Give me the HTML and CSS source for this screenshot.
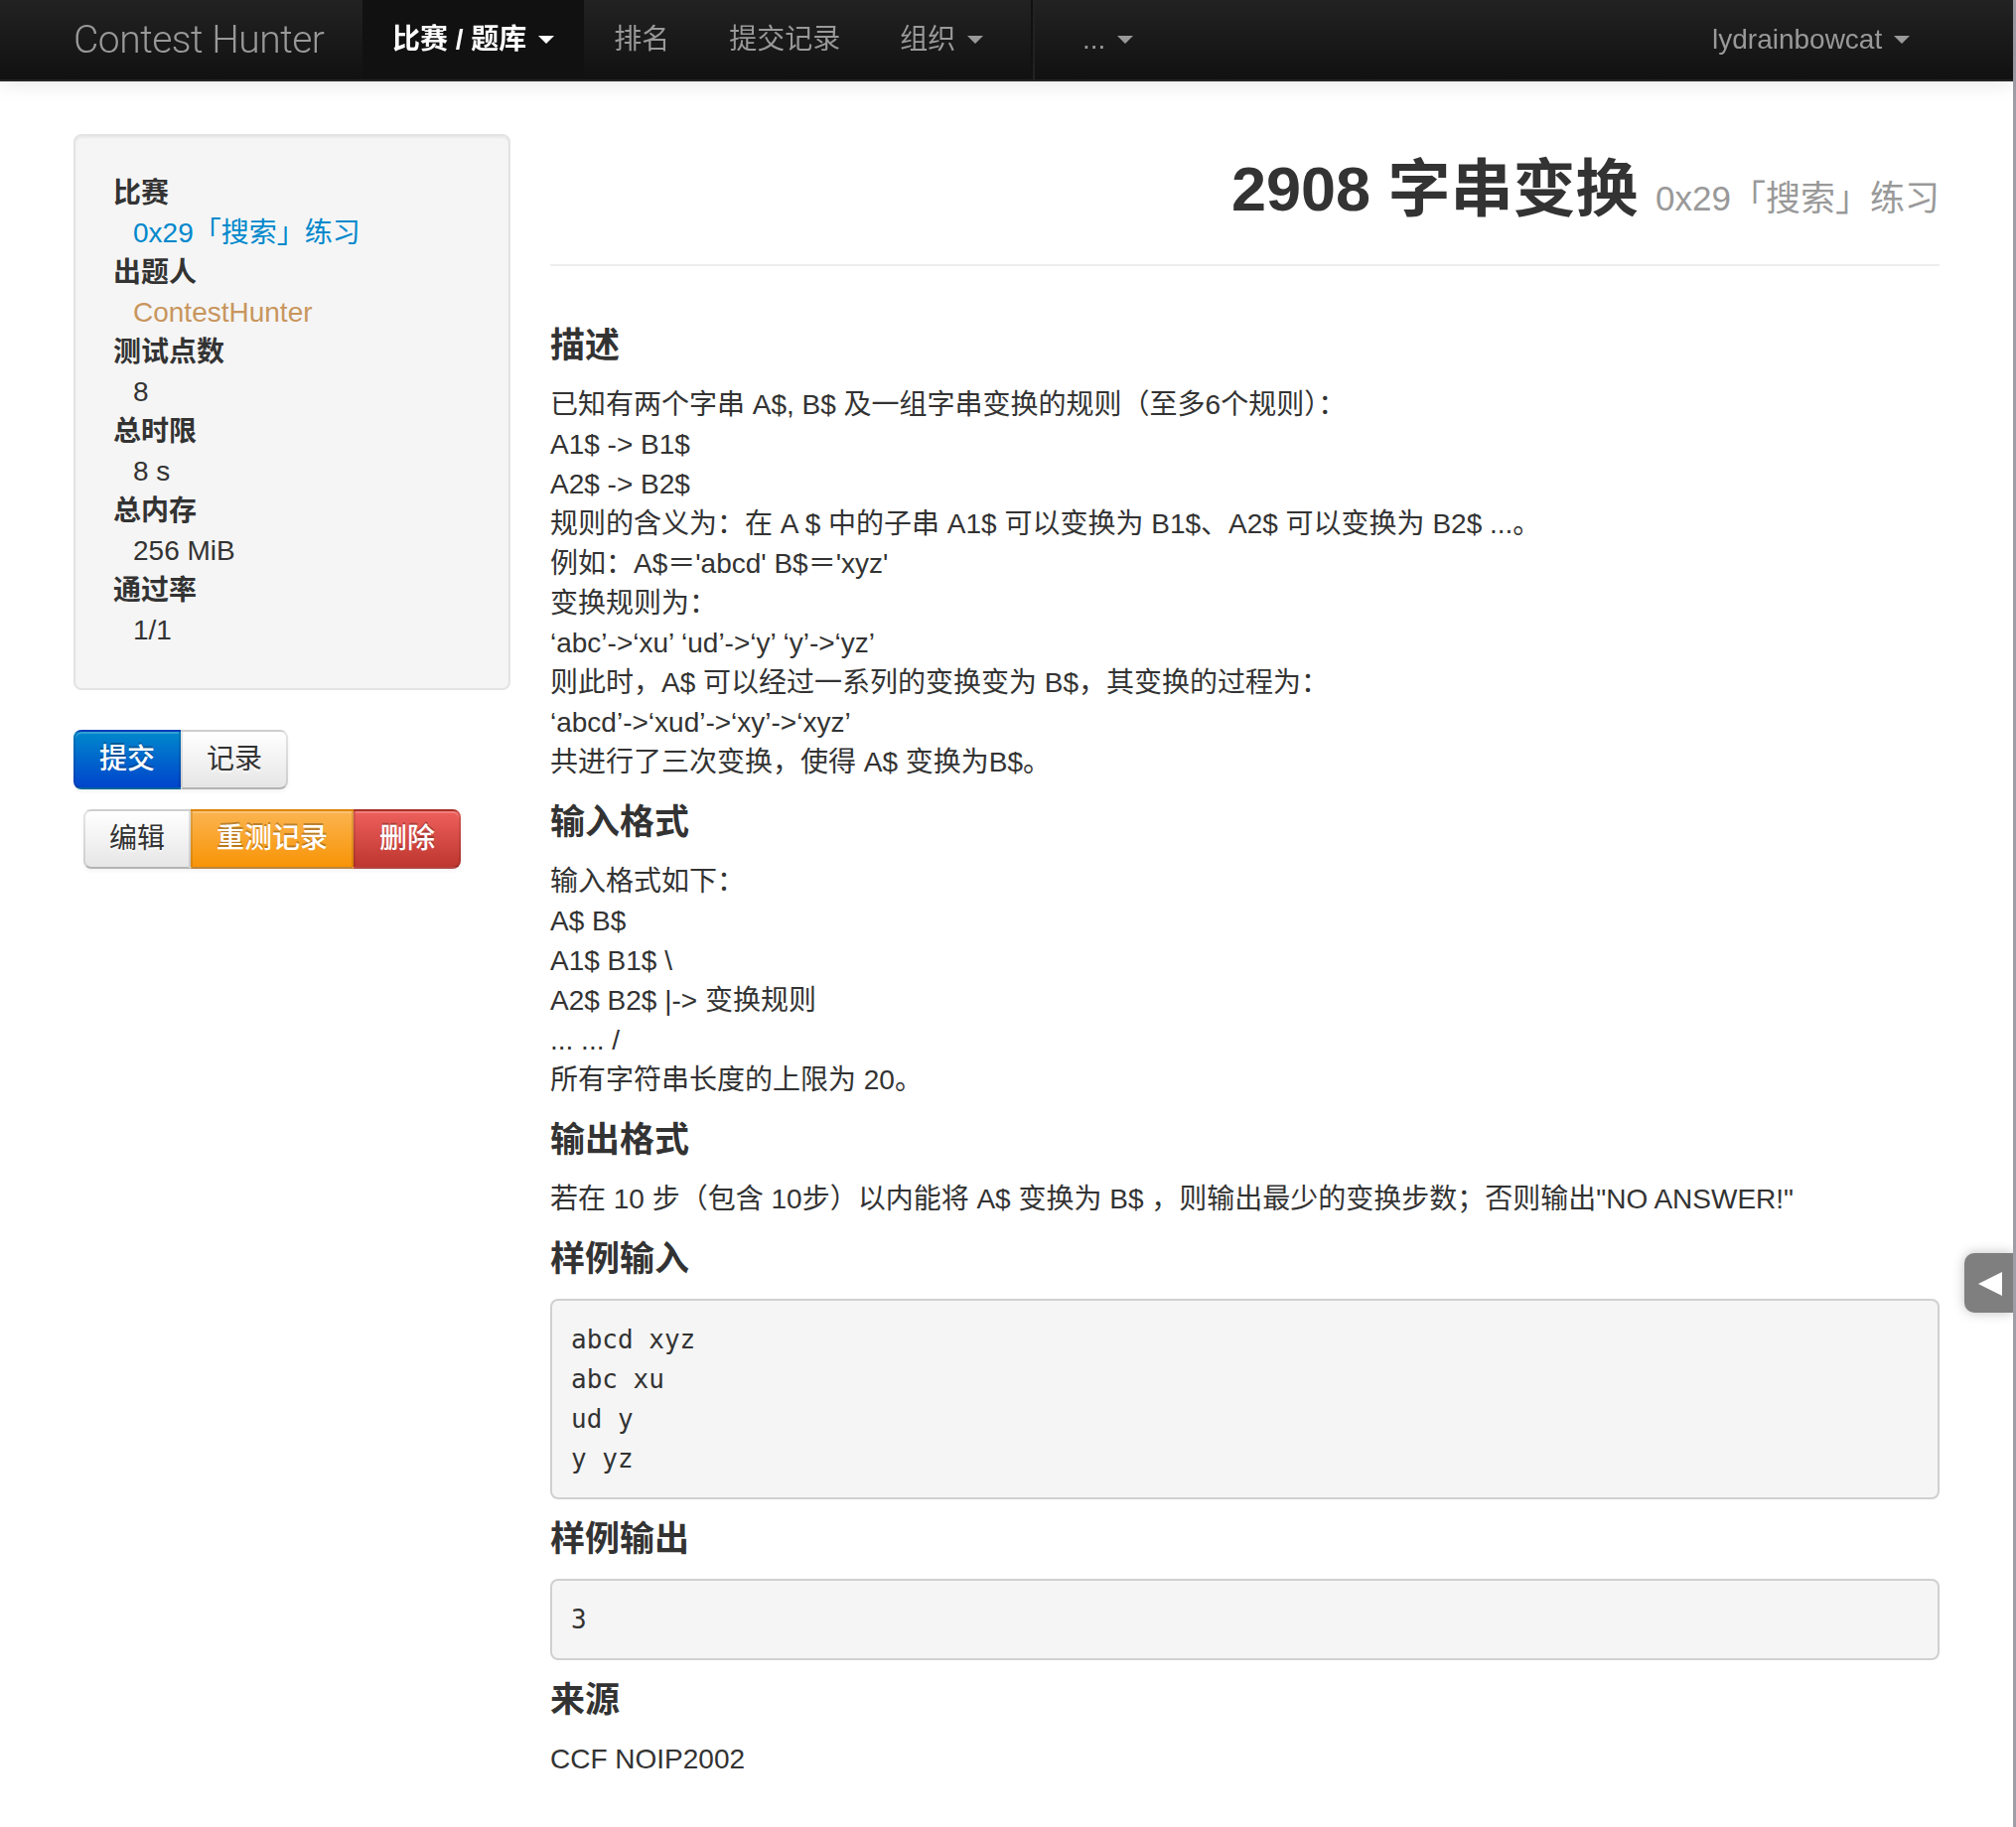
FILE: index.html
```html
<!DOCTYPE html>
<html lang="zh-CN">
<head>
<meta charset="utf-8">
<title>2908 字串变换 - Contest Hunter</title>
<link rel="stylesheet" href="styles.css">
</head>
<body>
<div class="page">
  <header class="navbar">
    <div class="navbar-inner">
      <a class="brand" href="#">Contest Hunter</a>
      <ul class="nav">
        <li class="active"><a href="#">比赛 / 题库 <b class="caret"></b></a></li>
        <li><a href="#">排名</a></li>
        <li><a href="#">提交记录</a></li>
        <li><a href="#">组织 <b class="caret"></b></a></li>
      </ul>
      <div class="divider-vertical"></div>
      <ul class="nav">
        <li><a href="#">... <b class="caret"></b></a></li>
      </ul>
      <ul class="nav nav-right">
        <li><a href="#">lydrainbowcat <b class="caret"></b></a></li>
      </ul>
    </div>
  </header>

  <div class="container">
    <aside class="sidebar">
      <div class="well">
        <dl class="info">
          <dt>比赛</dt>
          <dd><a href="#" class="link">0x29「搜索」练习</a></dd>
          <dt>出题人</dt>
          <dd><a href="#" class="author">ContestHunter</a></dd>
          <dt>测试点数</dt>
          <dd>8</dd>
          <dt>总时限</dt>
          <dd>8 s</dd>
          <dt>总内存</dt>
          <dd>256 MiB</dd>
          <dt>通过率</dt>
          <dd>1/1</dd>
        </dl>
      </div>
      <div class="btn-group">
        <a href="#" class="btn btn-primary">提交</a><a href="#" class="btn">记录</a>
      </div>
      <div class="btn-group btn-group-second">
        <a href="#" class="btn">编辑</a><a href="#" class="btn btn-warning">重测记录</a><a href="#" class="btn btn-danger">删除</a>
      </div>
    </aside>

    <main class="main">
      <div class="page-header">
        <h2>2908 字串变换 <small>0x29「搜索」练习</small></h2>
      </div>

      <h4>描述</h4>
      <p>已知有两个字串 A$, B$ 及一组字串变换的规则（至多6个规则）：<br>
      A1$ -&gt; B1$<br>
      A2$ -&gt; B2$<br>
      规则的含义为：在 A $ 中的子串 A1$ 可以变换为 B1$、A2$ 可以变换为 B2$ ...。<br>
      例如：A$＝'abcd' B$＝'xyz'<br>
      变换规则为：<br>
      ‘abc’-&gt;‘xu’ ‘ud’-&gt;‘y’ ‘y’-&gt;‘yz’<br>
      则此时，A$ 可以经过一系列的变换变为 B$，其变换的过程为：<br>
      ‘abcd’-&gt;‘xud’-&gt;‘xy’-&gt;‘xyz’<br>
      共进行了三次变换，使得 A$ 变换为B$。</p>

      <h4>输入格式</h4>
      <p>输入格式如下：<br>
      A$ B$<br>
      A1$ B1$ \<br>
      A2$ B2$ |-&gt; 变换规则<br>
      ... ... /<br>
      所有字符串长度的上限为 20。</p>

      <h4>输出格式</h4>
      <p>若在 10 步（包含 10步）以内能将 A$ 变换为 B$ ，则输出最少的变换步数；否则输出"NO ANSWER!"</p>

      <h4>样例输入</h4>
      <pre>abcd xyz
abc xu
ud y
y yz</pre>

      <h4>样例输出</h4>
      <pre>3</pre>

      <h4>来源</h4>
      <p>CCF NOIP2002</p>
    </main>
  </div>

  <a href="#" class="side-tab" aria-label="展开">
    <svg class="side-tab-icon" width="24" height="24" viewBox="0 0 24 24"><path d="M0 12 L24 0 L24 24 Z" fill="#fff"/></svg>
  </a>
</div>
<div class="edge"></div>
</body>
</html>
```

FILE: styles.css
```css
* {
  box-sizing: border-box;
}

html,
body {
  margin: 0;
  padding: 0;
  background: #fff;
}

body {
  font-family: "Liberation Sans", "Noto Sans CJK SC", sans-serif;
  font-size: 28px;
  line-height: 40px;
  color: #333;
}

a {
  text-decoration: none;
}

.page {
  width: 2027px;
}

.edge {
  position: fixed;
  top: 0;
  right: 0;
  width: 3px;
  height: 100%;
  background: #9f9ea6;
}

/* ---------- navbar ---------- */
.navbar {
  position: relative;
  z-index: 2;
  background: linear-gradient(#222222, #111111);
  border-bottom: 2px solid #252525;
  box-shadow: 0 2px 20px rgba(0, 0, 0, 0.1);
}

.navbar-inner {
  display: flex;
  height: 80px;
  padding: 0 74px;
}

.brand {
  flex: none;
  width: 291px;
  font-family: Roboto, "Liberation Sans", sans-serif;
  font-weight: 300;
  font-size: 39px;
  letter-spacing: -0.5px;
  line-height: 80px;
  color: #999;
}

.nav {
  display: flex;
  list-style: none;
  margin: 0;
  padding: 0;
}

.nav a {
  display: block;
  padding: 20px 30px;
  line-height: 40px;
  color: #999;
  white-space: nowrap;
}

.nav .active a {
  background: #111;
  color: #fff;
  font-weight: bold;
}

.caret {
  display: inline-block;
  width: 0;
  height: 0;
  vertical-align: top;
  margin-top: 16px;
  margin-left: 4px;
  border-top: 8px solid #999;
  border-left: 8px solid transparent;
  border-right: 8px solid transparent;
}

.active .caret {
  border-top-color: #fff;
}

.divider-vertical {
  flex: none;
  width: 4px;
  margin: 0 18px;
  border-left: 2px solid #111;
  border-right: 2px solid #222;
}

.nav-right {
  margin-left: auto;
}

/* ---------- layout ---------- */
.container {
  display: flex;
  gap: 40px;
  padding: 0 74px;
}

.sidebar {
  flex: none;
  width: 440px;
  margin-top: 53px;
}

.main {
  flex: 1;
  min-width: 0;
}

/* ---------- sidebar ---------- */
.well {
  background: #f5f5f5;
  border: 2px solid #e3e3e3;
  border-radius: 8px;
  padding: 38px;
  margin-bottom: 40px;
  box-shadow: inset 0 2px 2px rgba(0, 0, 0, 0.05);
}

.info {
  margin: 0;
}

.info dt {
  font-weight: bold;
}

.info dd {
  margin: 0 0 0 20px;
}

.link {
  color: #0088cc;
}

.author {
  color: #c8965e;
}

.btn-group {
  display: flex;
}

.btn-group-second {
  margin-top: 20px;
  margin-left: 10px;
}

.btn {
  display: block;
  padding: 8px 24px;
  font-size: 28px;
  line-height: 40px;
  color: #333;
  text-shadow: 0 2px 2px rgba(255, 255, 255, 0.75);
  background: linear-gradient(#ffffff, #e6e6e6);
  border: 2px solid;
  border-color: rgba(0, 0, 0, 0.1) rgba(0, 0, 0, 0.1) #b3b3b3;
  box-shadow: inset 0 2px 0 rgba(255, 255, 255, 0.2), 0 2px 4px rgba(0, 0, 0, 0.05);
}

.btn-group .btn:first-child {
  border-radius: 8px 0 0 8px;
}

.btn-group .btn:last-child {
  border-radius: 0 8px 8px 0;
}

.btn-primary,
.btn-warning,
.btn-danger {
  color: #fff;
  font-weight: 500;
  text-shadow: 0 -2px 0 rgba(0, 0, 0, 0.25);
  border-color: rgba(0, 0, 0, 0.1) rgba(0, 0, 0, 0.1) rgba(0, 0, 0, 0.25);
}

.btn-primary {
  background: linear-gradient(#0088cc, #0044cc);
}

.btn-warning {
  background: linear-gradient(#fbb450, #f89406);
}

.btn-danger {
  background: linear-gradient(#ee5f5b, #bd362f);
}

/* ---------- main ---------- */
.page-header {
  margin-top: 68px;
  margin-bottom: 60px;
  padding-bottom: 26px;
  border-bottom: 2px solid #eee;
}

.page-header h2 {
  margin: 0;
  font-size: 63px;
  line-height: 80px;
  font-weight: bold;
  text-align: right;
  color: #333;
}

.page-header small {
  font-size: 35px;
  font-weight: normal;
  color: #999;
}

h4 {
  margin: 20px 0;
  font-size: 35px;
  line-height: 40px;
  font-weight: bold;
  color: #333;
}

p {
  margin: 0 0 20px;
}

pre {
  margin: 0 0 20px;
  padding: 19px;
  font-family: "DejaVu Sans Mono", "Liberation Mono", monospace;
  font-size: 26px;
  line-height: 40px;
  color: #333;
  background: #f5f5f5;
  border: 2px solid rgba(0, 0, 0, 0.15);
  border-radius: 8px;
  white-space: pre;
}

/* ---------- floating tab ---------- */
.side-tab {
  position: fixed;
  top: 1262px;
  right: 3px;
  width: 49px;
  height: 60px;
  background: #7f7f7f;
  border-radius: 10px 0 0 10px;
  box-shadow: 0 0 12px rgba(0, 0, 0, 0.25);
}

.side-tab-icon {
  position: absolute;
  left: 14px;
  top: 19px;
}
```
